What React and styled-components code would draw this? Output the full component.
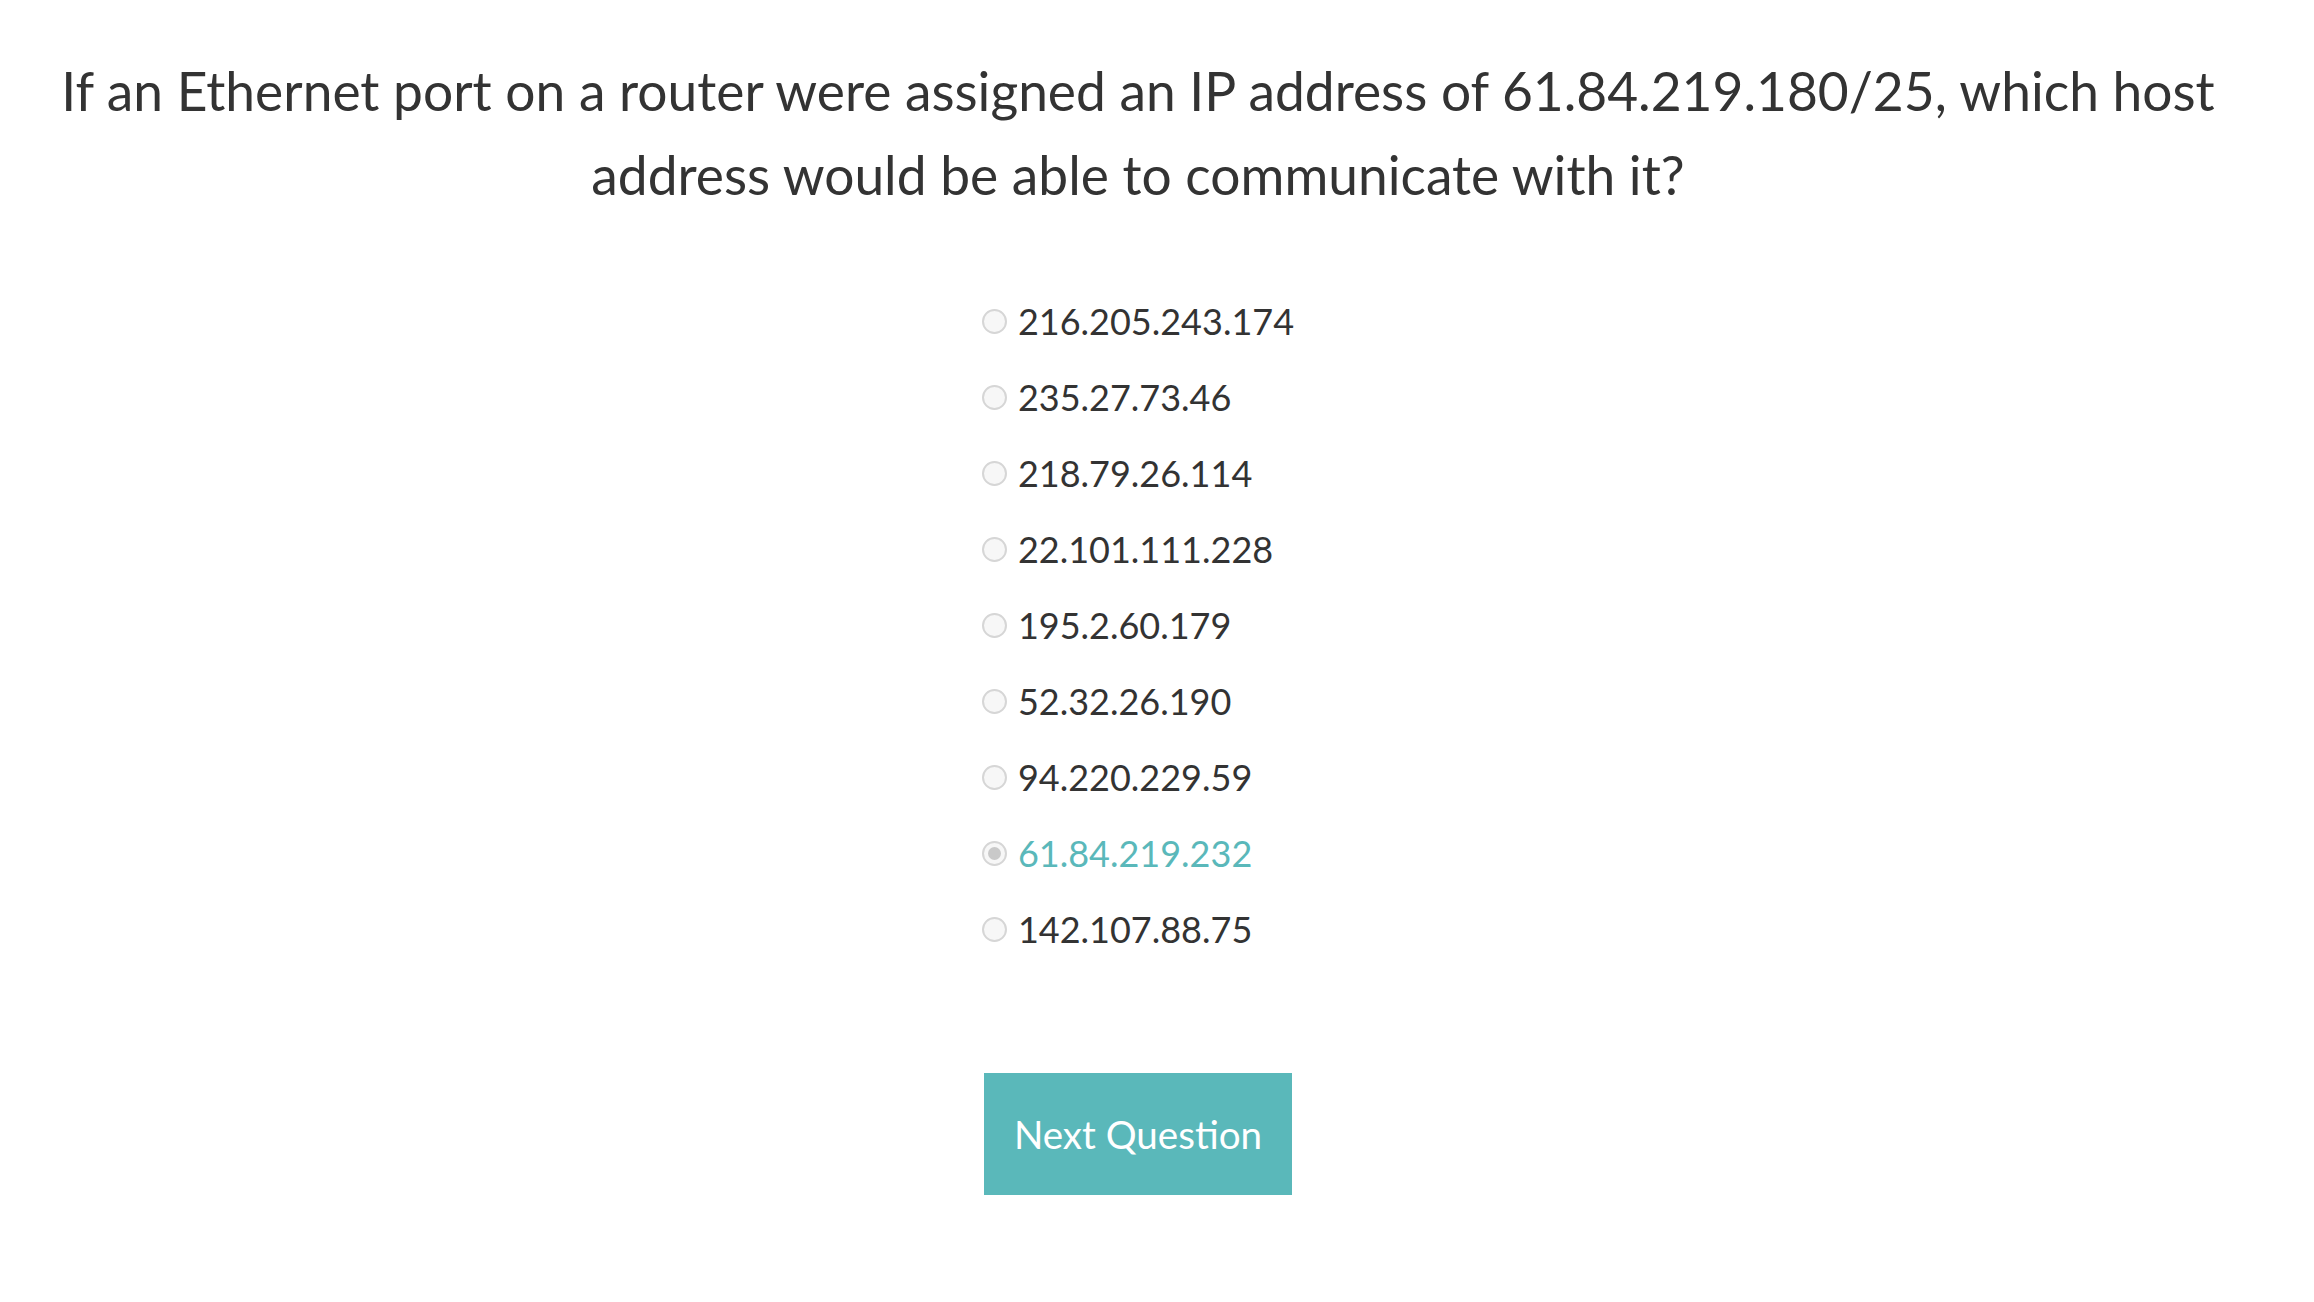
import styled, { createGlobalStyle } from "styled-components";
import { useState } from "react";

const GlobalStyle = createGlobalStyle`
  html, body {
    margin: 0;
    padding: 0;
    background: #fff;
  }
  body {
    font-family: "Lato", "Liberation Sans", sans-serif;
    color: #333;
  }
`;

const Page = styled.div`
  box-sizing: border-box;
  width: calc(100% - 38px);
  padding: 48px 40px 80px;
  display: flex;
  flex-direction: column;
  align-items: center;
`;

const Question = styled.h1`
  margin: 0;
  font-size: 53.3px;
  font-weight: 400;
  line-height: 84px;
  text-align: center;
  color: #333;
`;

const Options = styled.div`
  margin-top: 67px;
  display: flex;
  flex-direction: column;
  align-items: flex-start;
`;

const OptionRow = styled.label`
  display: flex;
  align-items: center;
  gap: 11px;
  height: 76px;
  font-size: 36px;
  color: ${({ $selected }) => ($selected ? "#5ab8ba" : "#333")};
  cursor: pointer;
`;

const Radio = styled.input`
  appearance: none;
  margin: 0;
  box-sizing: border-box;
  width: 25px;
  height: 25px;
  border-radius: 50%;
  border: 2px solid #d6d6d6;
  background: #f7f7f7;
  display: grid;
  place-items: center;

  &:checked::after {
    content: "";
    width: 13px;
    height: 13px;
    border-radius: 50%;
    background: #c9c9c9;
  }
`;

const NextButton = styled.button`
  margin-top: 106px;
  width: 308px;
  height: 122px;
  border: none;
  background: #5ab8ba;
  color: #fff;
  font-family: inherit;
  font-size: 38.6px;
  cursor: pointer;

  &:hover {
    background: #4fa9ab;
  }
`;

const answers = [
  "216.205.243.174",
  "235.27.73.46",
  "218.79.26.114",
  "22.101.111.228",
  "195.2.60.179",
  "52.32.26.190",
  "94.220.229.59",
  "61.84.219.232",
  "142.107.88.75",
];

const App = () => {
  const [picked, setPicked] = useState(7);

  return (
    <Page>
      <GlobalStyle />
      <Question>
        If an Ethernet port on a router were assigned an IP address of
        61.84.219.180/25, which host address would be able to communicate with
        it?
      </Question>

      <Options>
        {answers.map((ip, i) => (
          <OptionRow key={ip} $selected={picked === i}>
            <Radio
              type="radio"
              name="answer"
              checked={picked === i}
              onChange={() => setPicked(i)}
            />
            {ip}
          </OptionRow>
        ))}
      </Options>

      <NextButton>Next Question</NextButton>
    </Page>
  );
};

export default App;
